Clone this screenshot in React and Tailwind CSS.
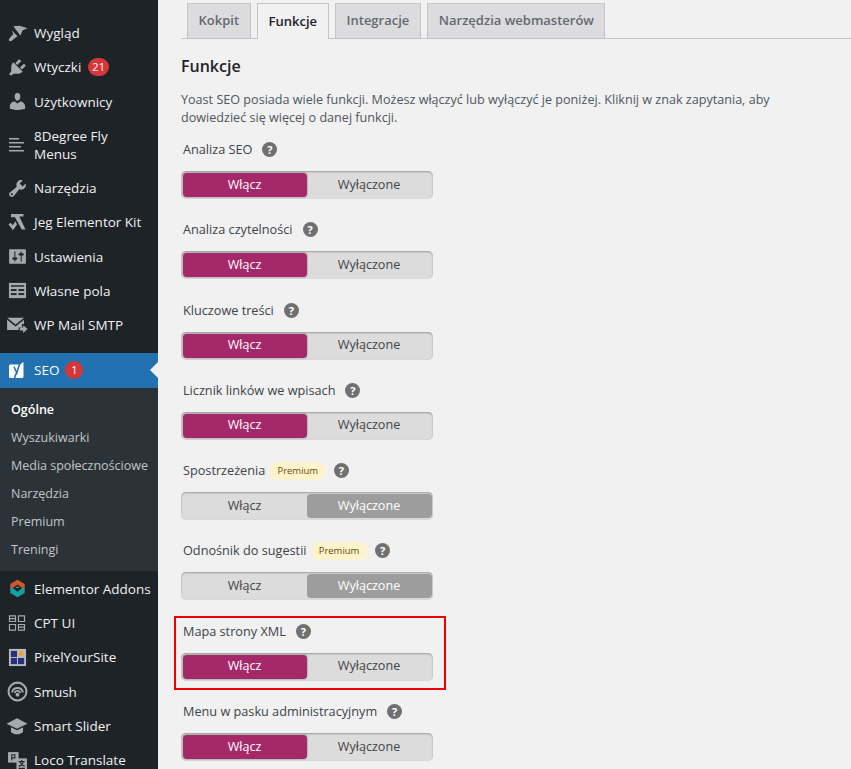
import { Fragment } from "react";

const dash = {
  plug: "M13.11 4.36L9.87 7.6 8 5.73l3.24-3.24c.35-.34 1.05-.2 1.56.32.52.51.66 1.21.31 1.55zm-8 1.77l.91-1.12 9.01 9.01-1.19.84c-.71.71-2.63 1.16-3.82 1.16H6.14L4.9 17.26c-.59.59-1.54.59-2.12 0-.59-.58-.59-1.53 0-2.12l1.24-1.24v-3.88c0-1.13.4-3.19 1.09-3.89zm7.26 3.97l3.24-3.24c.34-.35 1.04-.21 1.55.31.52.51.66 1.21.31 1.55l-3.24 3.25z",
  user: "M10 9.25c-2.27 0-2.73-3.44-2.73-3.44C7 4.02 7.82 2 9.97 2c2.16 0 2.98 2.02 2.71 3.81 0 0-.41 3.44-2.68 3.44zm0 2.57L12.72 10c2.39 0 4.52 2.33 4.52 4.53v2.49s-3.65 1.13-7.24 1.13c-3.65 0-7.24-1.13-7.24-1.13v-2.49c0-2.25 1.94-4.48 4.47-4.48z",
  wrench: "M16.68 9.77c-1.34 1.34-3.3 1.67-4.95.99l-5.41 6.52c-.99.99-2.59.99-3.58 0s-.99-2.59 0-3.57l6.52-5.42c-.68-1.65-.35-3.61.99-4.95 1.28-1.28 3.12-1.62 4.72-1.06l-2.89 2.89 2.82 2.82 2.86-2.87c.53 1.58.18 3.39-1.08 4.65zM3.81 16.21c.4.39 1.04.39 1.43 0 .4-.4.4-1.04 0-1.43-.39-.4-1.03-.4-1.43 0-.39.39-.39 1.03 0 1.43z",
  sliders: "M18 16V4c0-.55-.45-1-1-1H3c-.55 0-1 .45-1 1v12c0 .55.45 1 1 1h14c.55 0 1-.45 1-1zM8 11h1c.55 0 1 .45 1 1s-.45 1-1 1H8v1.5c0 .28-.22.5-.5.5s-.5-.22-.5-.5V13H6c-.55 0-1-.45-1-1s.45-1 1-1h1V5.5c0-.28.22-.5.5-.5s.5.22.5.5V11zm5-2h-1c-.55 0-1-.45-1-1s.45-1 1-1h1V5.5c0-.28.22-.5.5-.5s.5.22.5.5V7h1c.55 0 1 .45 1 1s-.45 1-1 1h-1v5.5c0 .28-.22.5-.5.5s-.5-.22-.5-.5V9z",
};

function Dash({ d }) {
  return (
    <svg viewBox="0 0 20 20" className="w-[21px] h-[21px]" fill="#a7aaad">
      <path fillRule="evenodd" d={d} />
    </svg>
  );
}

function Icon({ children, size = 20 }) {
  return (
    <svg viewBox="0 0 20 20" width={size} height={size} fill="#a7aaad">
      {children}
    </svg>
  );
}

const brush = (
  <Icon size={21}>
    <path d="M6 3l6-.3L19.500 5 15 7l-2.300 5z" />
    <path d="M4.500 7l5.500 5.500-2 1.500-3.500 3q-1.500 1-2.500-.2-.8-1 .8-2.800L6 10.500z" />
  </Icon>
);

const menuLines = (
  <Icon>
    <rect x="2" y="3" width="10" height="1.500" />
    <rect x="2" y="7" width="15" height="1.500" />
    <rect x="2" y="11" width="12" height="1.500" />
    <rect x="2" y="15" width="15" height="1.500" />
  </Icon>
);

const jeg = (
  <Icon size={20}>
    <path d="M4 2h12.500v2.600h-4.200l6.200 13h-3.700L9.500 8 8 5.200H4z" />
    <path d="M1.500 12.500l2-1.700 2.300 2.400 2.600-4 1.600 3.200-4 5.800z" />
  </Icon>
);

const fields = (
  <Icon size={19}>
    <rect x="1" y="2" width="18" height="16" />
    <g fill="#1d2327">
      <rect x="3" y="4.500" width="14" height="1.500" />
      <rect x="3" y="8.500" width="6" height="2" />
      <rect x="11" y="8.500" width="6" height="2" />
      <rect x="3" y="12.800" width="6" height="2" />
      <rect x="11" y="12.800" width="6" height="2" />
    </g>
  </Icon>
);

const mail = (
  <Icon size={22}>
    <path d="M1 3.500h15.500L8.700 9.600z" />
    <path d="M1 5.200v9.300h10.500v-2.300h3V9h1.800V5.200L8.700 11.400z" />
    <path d="M15.600 10.200l4 3.500-4 3.500v-2.100h-3v-2.800h3z" />
  </Icon>
);

const yoast = (
  <svg viewBox="0 0 20 20" width="20" height="20">
    <path fill="#fff" d="M3.500 4.500H13L16.500 2V16.500Q16.500 18 15 18H7L9 15.500 5 7.500H3.500Q2 7.500 2 6 2 4.500 3.500 4.500Z" />
    <path fill="#fff" d="M2 6h6v12H3.500Q2 18 2 16.500Z" />
    <path fill="none" stroke="#2271b1" strokeWidth="1.500" d="M7 6.500l2.800 6.500 3.700-12M9 13.500 7.500 18" />
  </svg>
);

const elementorAddons = (
  <svg viewBox="0 0 20 20" width="19" height="19">
    <path fill="#d2572b" d="M10 .8l7.600 4.400v4.300H2.400V5.200z" />
    <path fill="#19a0a0" d="M2.400 9.500h15.200v5.300L10 19.200l-7.600-4.400z" />
    <path fill="#1d2327" d="M10 5.800l5 3.700-5 3.900-5-3.900z" />
    <path fill="#19a0a0" d="M10 7.600l2.600 1.900H7.400z" />
  </svg>
);

const cpt = (
  <Icon size={18}>
    <path fillRule="evenodd" d="M1 1.500h8v7.500H1zm1.300 1.300v1.700h5.400V2.800zm0 3v1.900h5.400V5.800zM11 1.500h8v7.500h-8zm1.300 1.300v4.900h5.400V2.800zM1 11h8v7.500H1zm1.300 1.300v4.900h5.400v-4.900zM11 11h8v7.500h-8zm1.300 1.300v1.700h5.400v-1.700zm0 3v1.900h5.400v-1.900z" />
  </Icon>
);

const pixel = (
  <svg viewBox="0 0 20 20" width="19" height="19">
    <rect x="1" y="1" width="18" height="18" fill="#b9bbbd" />
    <rect x="3" y="3" width="6.500" height="6.500" fill="#2a2f7c" />
    <rect x="3" y="10.500" width="6.500" height="6.500" fill="#2a2f7c" />
    <rect x="10.500" y="10.500" width="6.500" height="6.500" fill="#2a2f7c" />
    <path fill="#e5a638" d="M13.700 2.500l3.500 3.500-3.500 3.500L10.300 6z" />
  </svg>
);

const smush = (
  <svg viewBox="0 0 20 20" width="21" height="21" fill="none" stroke="#a7aaad">
    <circle cx="10" cy="10" r="8.500" strokeWidth="2" />
    <path strokeWidth="1.800" d="M4.800 11a5.300 5.300 0 0 1 10.400 0" />
    <path strokeWidth="1.800" d="M7.300 11.500a2.800 2.800 0 0 1 5.400 0" />
    <circle cx="10" cy="13" r="1.800" fill="#a7aaad" stroke="none" />
  </svg>
);

const slider = (
  <svg viewBox="0 0 20 20" width="22" height="22" fill="#a7aaad">
    <path d="M10 3L.5 8 10 12.500 19.500 8z" />
    <path d="M4.500 11.200V15c0 1 2.500 2.500 5.500 2.500s5.500-1.500 5.500-2.500v-3.800L10 13.800z" />
  </svg>
);

const loco = (
  <svg viewBox="0 0 20 20" width="21" height="21">
    <path fill="#a7aaad" d="M1 2h10v10H1z" />
    <path fill="#1d2327" d="M4 4h4v4H5v2H4zm1 1v2h2V5z" />
    <path fill="#a7aaad" d="M9 8h10v11H9z" />
    <path fill="none" stroke="#1d2327" d="M11 11h6M14 9.500V11M12.500 11c.5 2.500 2.500 4 4.500 4.500M15.500 11c-.5 2.500-2 4-4.500 4.500M11 17.500h6" />
  </svg>
);

function MenuItem({ icon, label, badge, height = "h-[34.3px]" }) {
  return (
    <div className={`flex items-center ${height}`}>
      <span className="flex w-[34px] shrink-0 justify-center">{icon}</span>
      <span className="text-[#f0f0f1] leading-[18px]">{label}</span>
      {badge && (
        <span className="ml-[7px] flex h-[18px] min-w-[18px] items-center justify-center rounded-full bg-[#d63638] px-[4px] text-[11px] text-white">
          {badge}
        </span>
      )}
    </div>
  );
}

function Sidebar() {
  return (
    <aside className="w-[158px] shrink-0 bg-[#1d2327] pt-[16px] text-[13.5px]">
      <MenuItem icon={brush} label="Wygląd" />
      <MenuItem icon={<Dash d={dash.plug} />} label="Wtyczki" badge="21" />
      <MenuItem icon={<Dash d={dash.user} />} label="Użytkownicy" />
      <MenuItem icon={menuLines} label={<Fragment>8Degree Fly<br />Menus</Fragment>} height="h-[52px]" />
      <MenuItem icon={<Dash d={dash.wrench} />} label="Narzędzia" />
      <MenuItem icon={jeg} label="Jeg Elementor Kit" />
      <MenuItem icon={<Dash d={dash.sliders} />} label="Ustawienia" />
      <MenuItem icon={fields} label="Własne pola" />
      <MenuItem icon={mail} label="WP Mail SMTP" />

      <div className="relative mt-[10.5px] flex h-[35px] items-center bg-[#2271b1]">
        <span className="flex w-[34px] shrink-0 justify-center">{yoast}</span>
        <span className="text-white">SEO</span>
        <span className="ml-[6px] flex h-[18px] w-[18px] items-center justify-center rounded-full bg-[#d63638] text-[11px] text-white">1</span>
        <span className="absolute right-0 top-[9px] border-y-[8px] border-r-[8px] border-y-transparent border-r-[#f1f1f1]" />
      </div>
      <div className="flex h-[183.6px] flex-col bg-[#2c3338] pt-[8px] text-[12.5px] text-[#c3c4c7]">
        <div className="flex h-[28px] items-center pl-[11px] font-semibold text-white">Ogólne</div>
        {["Wyszukiwarki", "Media społecznościowe", "Narzędzia", "Premium", "Treningi"].map((s) => (
          <div key={s} className="flex h-[28px] items-center pl-[11px]">{s}</div>
        ))}
      </div>

      <MenuItem icon={elementorAddons} label="Elementor Addons" />
      <MenuItem icon={cpt} label="CPT UI" />
      <MenuItem icon={pixel} label="PixelYourSite" />
      <MenuItem icon={smush} label="Smush" />
      <MenuItem icon={slider} label="Smart Slider" />
      <MenuItem icon={loco} label="Loco Translate" />
    </aside>
  );
}

function HelpIcon() {
  return (
    <span className="flex h-[15px] w-[15px] items-center justify-center rounded-full bg-[#707070] text-[11px] font-bold leading-none text-white">?</span>
  );
}

function Toggle({ on }) {
  return (
    <div className="flex h-[28px] w-[252px] rounded-[5px] bg-[#dcdcdc] px-[1.5px] py-[2px] text-[12.6px] shadow-[inset_0_1px_2px_rgba(0,0,0,0.3)]">
      <div className={`flex w-[124px] items-center justify-center rounded-[4px] ${on ? "bg-[#a4286a] text-white shadow-[0_0_2px_rgba(0,0,0,0.5)]" : "text-[#444]"}`}>Włącz</div>
      <div className={`flex flex-1 items-center justify-center rounded-[4px] ${on ? "text-[#444]" : "bg-[#9d9d9d] text-white"}`}>Wyłączone</div>
    </div>
  );
}

function Feature({ label, on = true, premium, boxed }) {
  return (
    <section className="relative h-[80.3px] pt-[6.5px]">
      {boxed && <div className="absolute left-[-7px] top-[1px] h-[74px] w-[272px] border-2 border-[#ee0000]" />}
      <div className="flex h-[20px] items-center pl-[2px] text-[12.7px] text-[#3c434a]">
        <span>{label}</span>
        {premium && (
          <span className="ml-[4px] flex h-[18px] w-[57px] items-center justify-center rounded-full bg-[#fff3cd] text-[9.5px] text-[#674e00]">Premium</span>
        )}
        <span className={premium ? "ml-[7.5px]" : "ml-[10px]"}><HelpIcon /></span>
      </div>
      <div className="mt-[11.5px]">
        <Toggle on={on} />
      </div>
    </section>
  );
}

function Tab({ label, active }) {
  return active ? (
    <div className="-mb-px flex h-[36px] items-center border border-b-0 border-[#c3c4c7] bg-[#f1f1f1] px-[10.5px] font-semibold text-[#1d2327]">{label}</div>
  ) : (
    <div className="flex h-[35px] items-center border border-b-0 border-[#c3c4c7] bg-[#dcdcde] px-[10.5px] font-semibold text-[#646970]">{label}</div>
  );
}

export default function App() {
  return (
    <div className="flex h-[769px] w-[851px] overflow-hidden bg-[#f1f1f1] font-['Open_Sans','Liberation_Sans',sans-serif]">
      <Sidebar />
      <main className="min-w-0 flex-1 pl-[23px] pt-[3px]">
        <div className="flex h-[36px] gap-[6.5px] border-b border-[#c3c4c7] pl-[6px] text-[13px]">
          <Tab label="Kokpit" />
          <Tab label="Funkcje" active />
          <Tab label="Integracje" />
          <Tab label="Narzędzia webmasterów" />
        </div>
        <h2 className="mt-[16px] text-[16px] font-semibold leading-[22px] text-[#1d2327]">Funkcje</h2>
        <p className="mt-[14px] w-[610px] text-[12.6px] leading-[18px] text-[#50575e]">
          Yoast SEO posiada wiele funkcji. Możesz włączyć lub wyłączyć je poniżej. Kliknij w znak zapytania, aby dowiedzieć się więcej o danej funkcji.
        </p>
        <div className="mt-[6px]">
          <Feature label="Analiza SEO" />
          <Feature label="Analiza czytelności" />
          <Feature label="Kluczowe treści" />
          <Feature label="Licznik linków we wpisach" />
          <Feature label="Spostrzeżenia" on={false} premium />
          <Feature label="Odnośnik do sugestii" on={false} premium />
          <Feature label="Mapa strony XML" boxed />
          <Feature label="Menu w pasku administracyjnym" />
        </div>
      </main>
    </div>
  );
}
